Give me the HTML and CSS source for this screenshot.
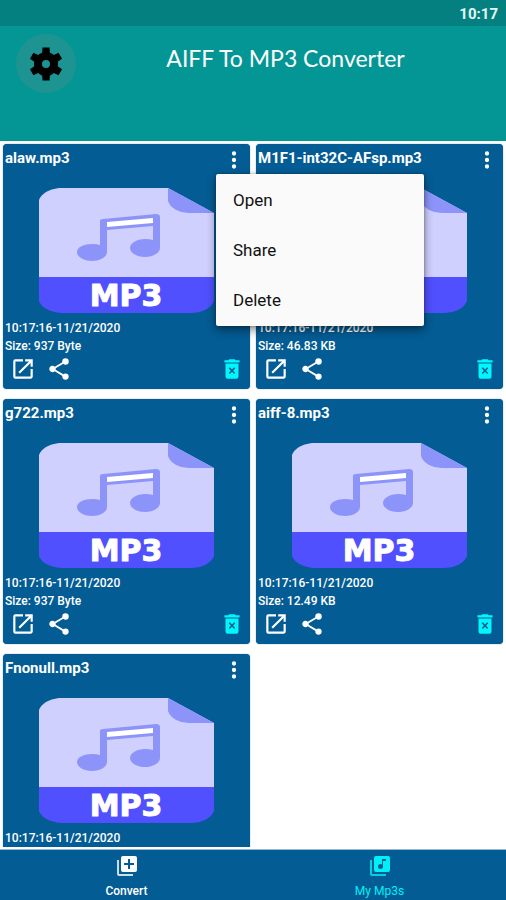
FILE: index.html
```html
<!DOCTYPE html>
<html lang="en">
<head>
<meta charset="utf-8">
<meta name="viewport" content="width=device-width, initial-scale=1">
<title>AIFF To MP3 Converter</title>
<link rel="stylesheet" href="styles.css">
</head>
<body>
<svg class="sprite" aria-hidden="true">
  <symbol id="more" viewBox="0 0 24 24"><path d="M12 8a2 2 0 1 0 0-4 2 2 0 0 0 0 4zm0 2a2 2 0 1 0 0 4 2 2 0 0 0 0-4zm0 6a2 2 0 1 0 0 4 2 2 0 0 0 0-4z"/></symbol>
  <symbol id="open" viewBox="0 0 24 24"><path d="M19 19H5V5h7V3H5a2 2 0 0 0-2 2v14a2 2 0 0 0 2 2h14c1.100 0 2-.9 2-2v-7h-2v7zM14 3v2h3.590l-9.830 9.830 1.410 1.410L19 6.410V10h2V3h-7z"/></symbol>
  <symbol id="share" viewBox="0 0 24 24"><path d="M18 16.080c-.76 0-1.440.3-1.960.77L8.910 12.700c.05-.23.09-.46.09-.7s-.04-.47-.09-.7l7.050-4.110c.54.5 1.250.81 2.040.81a3 3 0 1 0-3-3c0 .24.04.47.09.7L8.040 9.810A3 3 0 1 0 6 15c.79 0 1.500-.31 2.040-.81l7.120 4.160c-.05.21-.08.43-.08.65a2.920 2.920 0 1 0 2.920-2.920z"/></symbol>
  <symbol id="trash" viewBox="0 0 24 24"><path fill-rule="evenodd" d="M5 4h3.500l1-1h5l1 1H19v2H5zM6 7h12v12a2 2 0 0 1-2 2H8a2 2 0 0 1-2-2zM9 11.200 11 13.500 9 15.800 10 16.700 12 14.500 14 16.700 15 15.800 13 13.500 15 11.200 14 10.300 12 12.500 10 10.300z"/></symbol>
  <symbol id="gear" viewBox="0 0 40 40">
    <circle cx="20" cy="20" r="8" fill="none" stroke="currentColor" stroke-width="8"/>
    <g id="teeth">
      <path d="M16 11 16.500 3.500H23.500L24 11z"/>
      <path d="M16 11 16.500 3.500H23.500L24 11z" transform="rotate(60 20 20)"/>
      <path d="M16 11 16.500 3.500H23.500L24 11z" transform="rotate(120 20 20)"/>
      <path d="M16 11 16.500 3.500H23.500L24 11z" transform="rotate(180 20 20)"/>
      <path d="M16 11 16.500 3.500H23.500L24 11z" transform="rotate(240 20 20)"/>
      <path d="M16 11 16.500 3.500H23.500L24 11z" transform="rotate(300 20 20)"/>
    </g>
  </symbol>
  <symbol id="convert" viewBox="0 0 24 24"><path opacity=".8" d="M4 6H2v14a2 2 0 0 0 2 2h14v-2H4z"/><path fill-rule="evenodd" d="M20 2H8a2 2 0 0 0-2 2v12a2 2 0 0 0 2 2h12a2 2 0 0 0 2-2V4a2 2 0 0 0-2-2zm-1 9h-4v4h-2v-4H9V9h4V5h2v4h4z"/></symbol>
  <symbol id="library" viewBox="0 0 24 24"><path opacity=".8" d="M4 6H2v14a2 2 0 0 0 2 2h14v-2H4z"/><path fill-rule="evenodd" d="M20 2H8a2 2 0 0 0-2 2v12a2 2 0 0 0 2 2h12a2 2 0 0 0 2-2V4a2 2 0 0 0-2-2zm-2 5h-3v5.500a2.500 2.500 0 1 1-2.500-2.500c.57 0 1.080.19 1.500.51V5h4z"/></symbol>
  <symbol id="file" viewBox="0 0 175 125">
    <path fill="#d0d0ff" d="M20 0H129L175 25V90H0V12Q4 2 20 0z"/>
    <path fill="#8c94fa" d="M129 0 175 25H150Q133 24 129 13z"/>
    <path fill="#5050fe" d="M0 89H175V113Q170 124 153 125H22Q4 123 0 113z"/>
    <path fill="#8c94fa" d="M61 33Q61 31 64 31L117 26Q121 26 121 29V60C121 65 114 69 106 69S91 65 91 60 98 51 106 51Q111 51 114 52V38L68 42V64C68 69 61 73 53 73S38 69 38 64 45 56 53 56Q58 56 61 57z"/>
    <path fill="#fff" d="M68 34 114 30V35L68 39z"/>
  </symbol>
</svg>

<div class="status">10:17</div>
<header class="header">
  <button class="settings" aria-label="Settings"><svg><use href="#gear"/></svg></button>
  <h1 class="title">AIFF To MP3 Converter</h1>
</header>

<main class="files">
  <article class="card">
    <div class="card-head">
      <h2 class="name">alaw.mp3</h2>
      <div class="more-wrap">
        <button class="icon" aria-label="More"><svg><use href="#more"/></svg></button>
        <div class="menu">
          <button class="menu-item">Open</button>
          <button class="menu-item">Share</button>
          <button class="menu-item">Delete</button>
        </div>
      </div>
    </div>
    <svg class="art"><use href="#file"/><text class="file-type" x="87" y="118" text-anchor="middle">MP3</text></svg>
    <p class="info">10:17:16-11/21/2020</p>
    <p class="info">Size: 937 Byte</p>
    <div class="actions">
      <button class="icon" aria-label="Open"><svg><use href="#open"/></svg></button>
      <button class="icon" aria-label="Share"><svg><use href="#share"/></svg></button>
      <button class="icon trash" aria-label="Delete"><svg><use href="#trash"/></svg></button>
    </div>
  </article>
  <article class="card">
    <div class="card-head">
      <h2 class="name">M1F1-int32C-AFsp.mp3</h2>
      <button class="icon" aria-label="More"><svg><use href="#more"/></svg></button>
    </div>
    <svg class="art"><use href="#file"/><text class="file-type" x="87" y="118" text-anchor="middle">MP3</text></svg>
    <p class="info">10:17:16-11/21/2020</p>
    <p class="info">Size: 46.83 KB</p>
    <div class="actions">
      <button class="icon" aria-label="Open"><svg><use href="#open"/></svg></button>
      <button class="icon" aria-label="Share"><svg><use href="#share"/></svg></button>
      <button class="icon trash" aria-label="Delete"><svg><use href="#trash"/></svg></button>
    </div>
  </article>
  <article class="card">
    <div class="card-head">
      <h2 class="name">g722.mp3</h2>
      <button class="icon" aria-label="More"><svg><use href="#more"/></svg></button>
    </div>
    <svg class="art"><use href="#file"/><text class="file-type" x="87" y="118" text-anchor="middle">MP3</text></svg>
    <p class="info">10:17:16-11/21/2020</p>
    <p class="info">Size: 937 Byte</p>
    <div class="actions">
      <button class="icon" aria-label="Open"><svg><use href="#open"/></svg></button>
      <button class="icon" aria-label="Share"><svg><use href="#share"/></svg></button>
      <button class="icon trash" aria-label="Delete"><svg><use href="#trash"/></svg></button>
    </div>
  </article>
  <article class="card">
    <div class="card-head">
      <h2 class="name">aiff-8.mp3</h2>
      <button class="icon" aria-label="More"><svg><use href="#more"/></svg></button>
    </div>
    <svg class="art"><use href="#file"/><text class="file-type" x="87" y="118" text-anchor="middle">MP3</text></svg>
    <p class="info">10:17:16-11/21/2020</p>
    <p class="info">Size: 12.49 KB</p>
    <div class="actions">
      <button class="icon" aria-label="Open"><svg><use href="#open"/></svg></button>
      <button class="icon" aria-label="Share"><svg><use href="#share"/></svg></button>
      <button class="icon trash" aria-label="Delete"><svg><use href="#trash"/></svg></button>
    </div>
  </article>
  <article class="card">
    <div class="card-head">
      <h2 class="name">Fnonull.mp3</h2>
      <button class="icon" aria-label="More"><svg><use href="#more"/></svg></button>
    </div>
    <svg class="art"><use href="#file"/><text class="file-type" x="87" y="118" text-anchor="middle">MP3</text></svg>
    <p class="info">10:17:16-11/21/2020</p>
  </article>
</main>

<nav class="tabs">
  <a class="tab" href="#convert-tab"><svg><use href="#convert"/></svg>Convert</a>
  <a class="tab active" href="#mp3s-tab"><svg><use href="#library"/></svg>My Mp3s</a>
</nav>
</body>
</html>
```
FILE: styles.css
```css
* { box-sizing: border-box; }

body {
  margin: 0;
  height: 100vh;
  display: flex;
  flex-direction: column;
  background: #fff;
  font-family: Roboto, "Liberation Sans", sans-serif;
  color: #fff;
}

svg { display: block; fill: currentColor; }
.sprite { position: absolute; width: 0; height: 0; }

button {
  border: 0;
  padding: 0;
  background: none;
  color: inherit;
  font: inherit;
  cursor: pointer;
}

.status {
  flex: none;
  padding: 2px 8px 0;
  background: #048080;
  color: #e4f6f6;
  font-size: 15px;
  font-weight: 700;
  line-height: 24px;
  text-align: right;
}

.header {
  flex: none;
  display: flex;
  align-items: flex-start;
  padding: 8px 11px 48px 16px;
  background: #049694;
}

.settings {
  display: grid;
  place-items: center;
  width: 60px;
  height: 59px;
  border-radius: 50%;
  background: #1e9492;
  color: #000;
}
.settings svg { width: 40px; height: 40px; }

.title {
  flex: 1;
  margin: 8px 0 0;
  font-family: Lato, sans-serif;
  font-size: 23px;
  font-weight: 400;
  line-height: 32px;
  text-align: center;
}

.files {
  flex: 1;
  min-height: 0;
  overflow: hidden;
  display: grid;
  grid-template-columns: 1fr 1fr;
  grid-auto-rows: min-content;
  gap: 10px 6px;
  padding: 3px 3px 0;
}

.card {
  min-height: 245px;
  padding: 2px;
  border-radius: 4px;
  background: #045c94;
  box-shadow: 0 0 1px #045c94;
}

.card-head { display: flex; justify-content: space-between; height: 42px; padding-right: 1px; }

.name {
  margin: 0;
  font-size: 15px;
  font-weight: 700;
  line-height: 24px;
}

.icon { display: block; width: 26px; height: 26px; }
.icon svg { width: 26px; height: 26px; }
.card-head .icon svg { height: 28px; }

.more-wrap { position: relative; }

.menu {
  position: absolute;
  z-index: 2;
  top: 28px;
  left: -5px;
  width: 208px;
  padding: 1px 0;
  border-radius: 2px;
  background: #fafafa;
  color: #111;
  box-shadow: 0 4px 10px rgba(0, 0, 0, .45), 0 0 3px rgba(0, 0, 0, .3);
}

.menu-item {
  display: block;
  width: 100%;
  padding: 0 17px;
  font-size: 17px;
  line-height: 50px;
  text-align: left;
}

.art { width: 175px; height: 125px; margin: 0 auto 6px; overflow: visible; }

.file-type {
  fill: #fff;
  stroke: #fff;
  stroke-width: 1px;
  stroke-linejoin: round;
  font-family: "DejaVu Sans", sans-serif;
  font-size: 30px;
  font-weight: 700;
}

.info {
  margin: 0;
  font-size: 12px;
  font-weight: 500;
  line-height: 18px;
}

.actions { display: flex; gap: 10px; padding: 1px 3px 0 5px; }
.trash { margin-left: auto; color: #00f8fc; }

.tabs {
  flex: none;
  display: flex;
  margin-top: 2px;
  border-top: 1px solid #9bb8cf;
  background: #045c94;
}

.tab {
  flex: 1;
  display: flex;
  flex-direction: column;
  align-items: center;
  gap: 4px;
  padding: 4px 0 0;
  color: #fff;
  font-size: 12px;
  font-weight: 500;
  line-height: 18px;
  text-decoration: none;
}
.tab svg { width: 24px; height: 24px; }
.tab.active { color: #00f0f8; font-weight: 400; }
```
